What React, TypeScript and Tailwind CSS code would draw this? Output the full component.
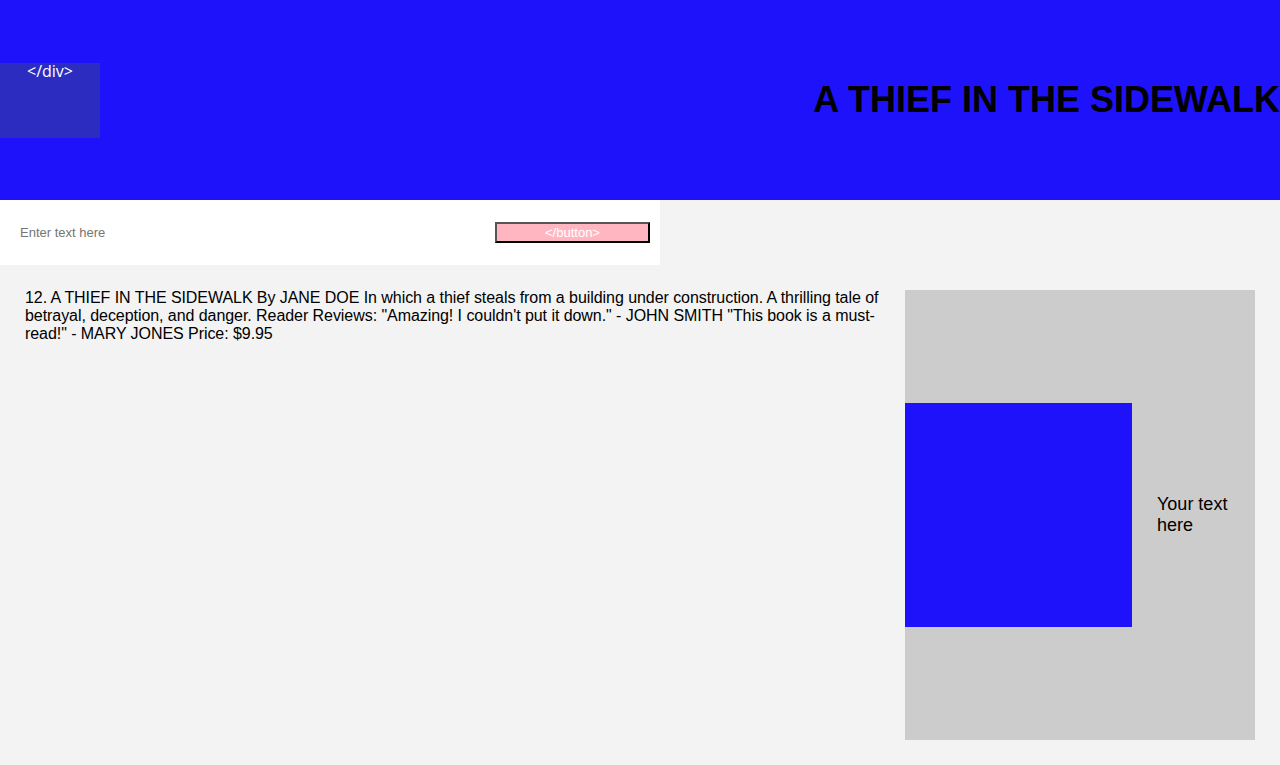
import React from 'react';

// COMPONENT
const App = () => {
    return (
        <div className="min-h-[765px] bg-[#f3f3f3] font-['Liberation_Sans',Arial,sans-serif] text-black">

            {/* header */}
            <header className="h-[200px] bg-[#1e12fb] flex items-center justify-between">
                <div className="w-[100px] h-[75px] bg-[#2c2dc0] text-white text-center text-[16px] leading-[16px] font-['Open_Sans',sans-serif]">
                    &lt;/div&gt;
                </div>
                <h1 className="text-[36px] font-bold leading-none whitespace-nowrap">A THIEF IN THE SIDEWALK</h1>
            </header>

            {/* search */}
            <div className="w-[660px] h-[65px] bg-white flex items-center pl-[20px] pr-[10px]">
                <input
                    type="text"
                    placeholder="Enter text here"
                    className="flex-1 text-[13px] outline-none placeholder:text-[#757575] bg-transparent"
                />
                <button className="w-[155px] h-[21px] bg-[#ffb6c1] text-white text-[13px] leading-none border-2 border-[#555] border-r-black border-b-black">
                    &lt;/button&gt;
                </button>
            </div>

            {/* content */}
            <main className="flex p-[25px] gap-[20px]">
                <p className="flex-1 text-[16px] leading-[18px] tracking-[-0.06px] -mt-px">
                    12. A THIEF IN THE SIDEWALK By JANE DOE In which a thief steals from a building under construction. A thrilling tale of betrayal, deception, and danger. Reader Reviews: "Amazing! I couldn't put it down." - JOHN SMITH "This book is a must-read!" - MARY JONES Price: $9.95
                </p>
                <div className="w-[350px] h-[450px] bg-[#cccccc] flex items-center gap-[25px] pr-[25px] shrink-0">
                    <div className="w-[227px] h-[224px] bg-[#1e12fb] shrink-0" />
                    <p className="text-[18px] leading-[21px]">Your text here</p>
                </div>
            </main>
        </div>
    );
};

export default App;
